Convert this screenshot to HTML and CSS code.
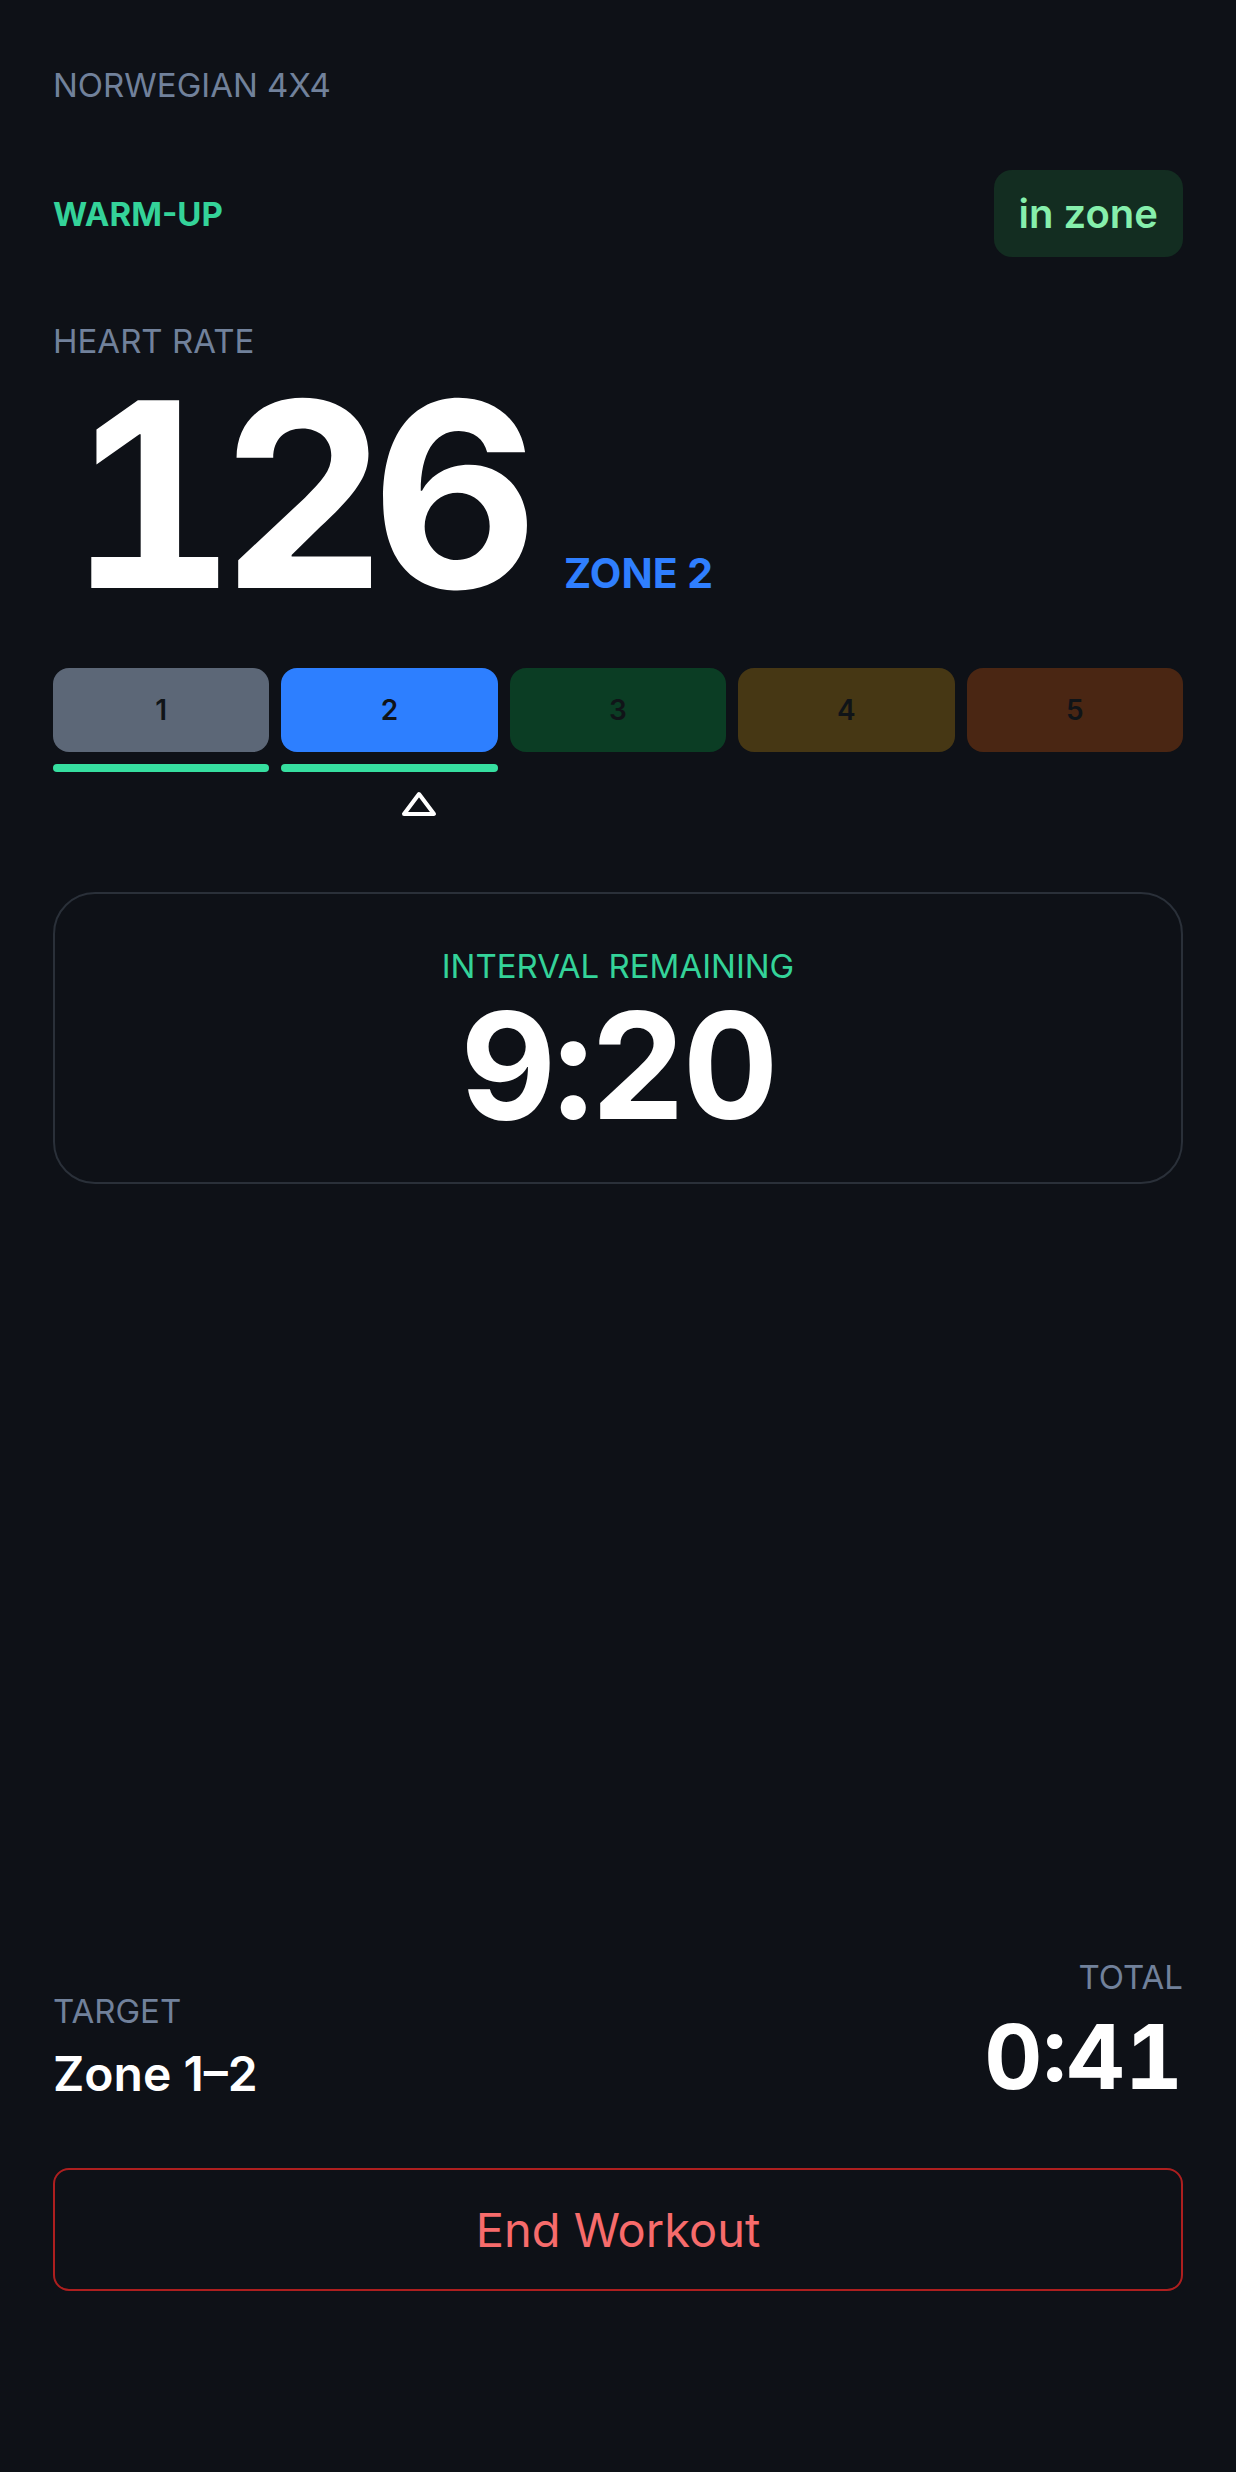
FILE: index.html
```html
<!DOCTYPE html>
<html lang="en">
<head>
<meta charset="utf-8">
<title>Norwegian 4x4</title>
<link rel="stylesheet" href="styles.css">
</head>
<body>
<main class="screen">
  <div class="workout-name">NORWEGIAN 4X4</div>

  <div class="phase-row">
    <div class="phase">WARM-UP</div>
    <div class="status-badge">in zone</div>
  </div>

  <div class="label hr-label">HEART RATE</div>
  <div class="hr-row">
    <div class="hr-value">126</div>
    <div class="hr-zone">ZONE 2</div>
  </div>

  <div class="zones">
    <div class="zone zone-1">1</div>
    <div class="zone zone-2">2</div>
    <div class="zone zone-3">3</div>
    <div class="zone zone-4">4</div>
    <div class="zone zone-5">5</div>
    <div class="target-bar on"></div>
    <div class="target-bar on"></div>
    <div class="target-bar"></div>
    <div class="target-bar"></div>
    <div class="target-bar"></div>
  </div>

  <div class="marker-track">
    <svg class="marker" style="left: 30.8%" width="36" height="26" viewBox="0 0 36 26" aria-hidden="true">
      <polygon points="18,3 33,23 3,23" fill="none" stroke="#ffffff" stroke-width="4" stroke-linejoin="round"/>
    </svg>
  </div>

  <section class="interval-card">
    <div class="interval-label">INTERVAL REMAINING</div>
    <div class="interval-time">9:20</div>
  </section>

  <div class="footer">
    <div class="stats-row">
      <div class="stat">
        <div class="label">TARGET</div>
        <div class="target-value">Zone 1–2</div>
      </div>
      <div class="stat stat-right">
        <div class="label">TOTAL</div>
        <div class="total-value">0:41</div>
      </div>
    </div>
    <button class="end-button" type="button">End Workout</button>
  </div>
</main>
</body>
</html>
```

FILE: styles.css
```css
* {
  box-sizing: border-box;
}

html, body {
  margin: 0;
  padding: 0;
  background: #0e1117;
}

body {
  font-family: Inter, "Noto Sans", "Liberation Sans", sans-serif;
  color: #ffffff;
}

.screen {
  min-height: 2472px;
  display: flex;
  flex-direction: column;
  padding: 65px 53px 181px 53px;
}

.workout-name,
.label {
  font-size: 33px;
  line-height: 40px;
  font-weight: 400;
  color: #71819b;
}

.phase-row {
  margin-top: 65px;
  display: flex;
  align-items: center;
  justify-content: space-between;
}

.phase {
  font-size: 33px;
  line-height: 40px;
  font-weight: 700;
  color: #34d399;
}

.status-badge {
  background: #132d21;
  color: #86efac;
  font-size: 40px;
  line-height: 48px;
  font-weight: 600;
  padding: 20px 25px 19px 25px;
  border-radius: 18px;
}

.hr-label {
  margin-top: 64px;
}

.hr-row {
  display: flex;
  align-items: baseline;
  gap: 41px;
  padding-left: 16px;
}

.hr-value {
  font-size: 258px;
  line-height: 1;
  margin-top: 4px;
  font-weight: 700;
  letter-spacing: -0.06em;
  font-feature-settings: "tnum" 1;
  color: #ffffff;
}

.hr-zone {
  font-size: 41px;
  font-weight: 700;
  color: #2f7fff;
}

.zones {
  margin-top: 45px;
  display: grid;
  grid-template-columns: repeat(5, 1fr);
  column-gap: 12px;
  row-gap: 12px;
}

.zone {
  height: 84px;
  border-radius: 16px;
  display: flex;
  align-items: center;
  justify-content: center;
  font-size: 28px;
  font-weight: 600;
  color: #101418;
}

.zone-1 { background: #5c6777; }
.zone-2 { background: #2d7fff; }
.zone-3 { background: #0b3d24; }
.zone-4 { background: #463714; }
.zone-5 { background: #4a2613; }

.target-bar {
  height: 8px;
  border-radius: 4px;
}

.target-bar.on {
  background: #36dfa0;
}

.marker-track {
  position: relative;
  height: 28px;
  margin-top: 19px;
}

.marker {
  position: absolute;
  top: 0;
  display: block;
}

.interval-card {
  margin-top: 73px;
  border: 2px solid #2a3039;
  border-radius: 42px;
  padding: 52px 20px 42px 20px;
  display: flex;
  flex-direction: column;
  align-items: center;
}

.interval-label {
  font-size: 33px;
  line-height: 40px;
  color: #34d399;
}

.interval-time {
  margin-top: 6px;
  font-size: 148px;
  line-height: 1;
  font-weight: 700;
  letter-spacing: -0.02em;
  font-feature-settings: "tnum" 1;
}

.footer {
  margin-top: auto;
  display: flex;
  flex-direction: column;
}

.stats-row {
  display: flex;
  justify-content: space-between;
  align-items: flex-end;
}

.stat {
  display: flex;
  flex-direction: column;
}

.stat-right {
  align-items: flex-end;
}

.target-value {
  margin-top: 14px;
  font-size: 48px;
  line-height: 57px;
  font-weight: 600;
}

.total-value {
  margin-top: 15px;
  font-size: 90px;
  line-height: 1;
  font-weight: 700;
  font-feature-settings: "tnum" 1;
}

.end-button {
  margin-top: 66px;
  height: 123px;
  width: 100%;
  background: transparent;
  border: 2px solid #ad1f1f;
  border-radius: 16px;
  color: #f76b6b;
  font-family: Inter, "Noto Sans", "Liberation Sans", sans-serif;
  font-size: 47px;
  font-weight: 400;
  cursor: pointer;
}
```
